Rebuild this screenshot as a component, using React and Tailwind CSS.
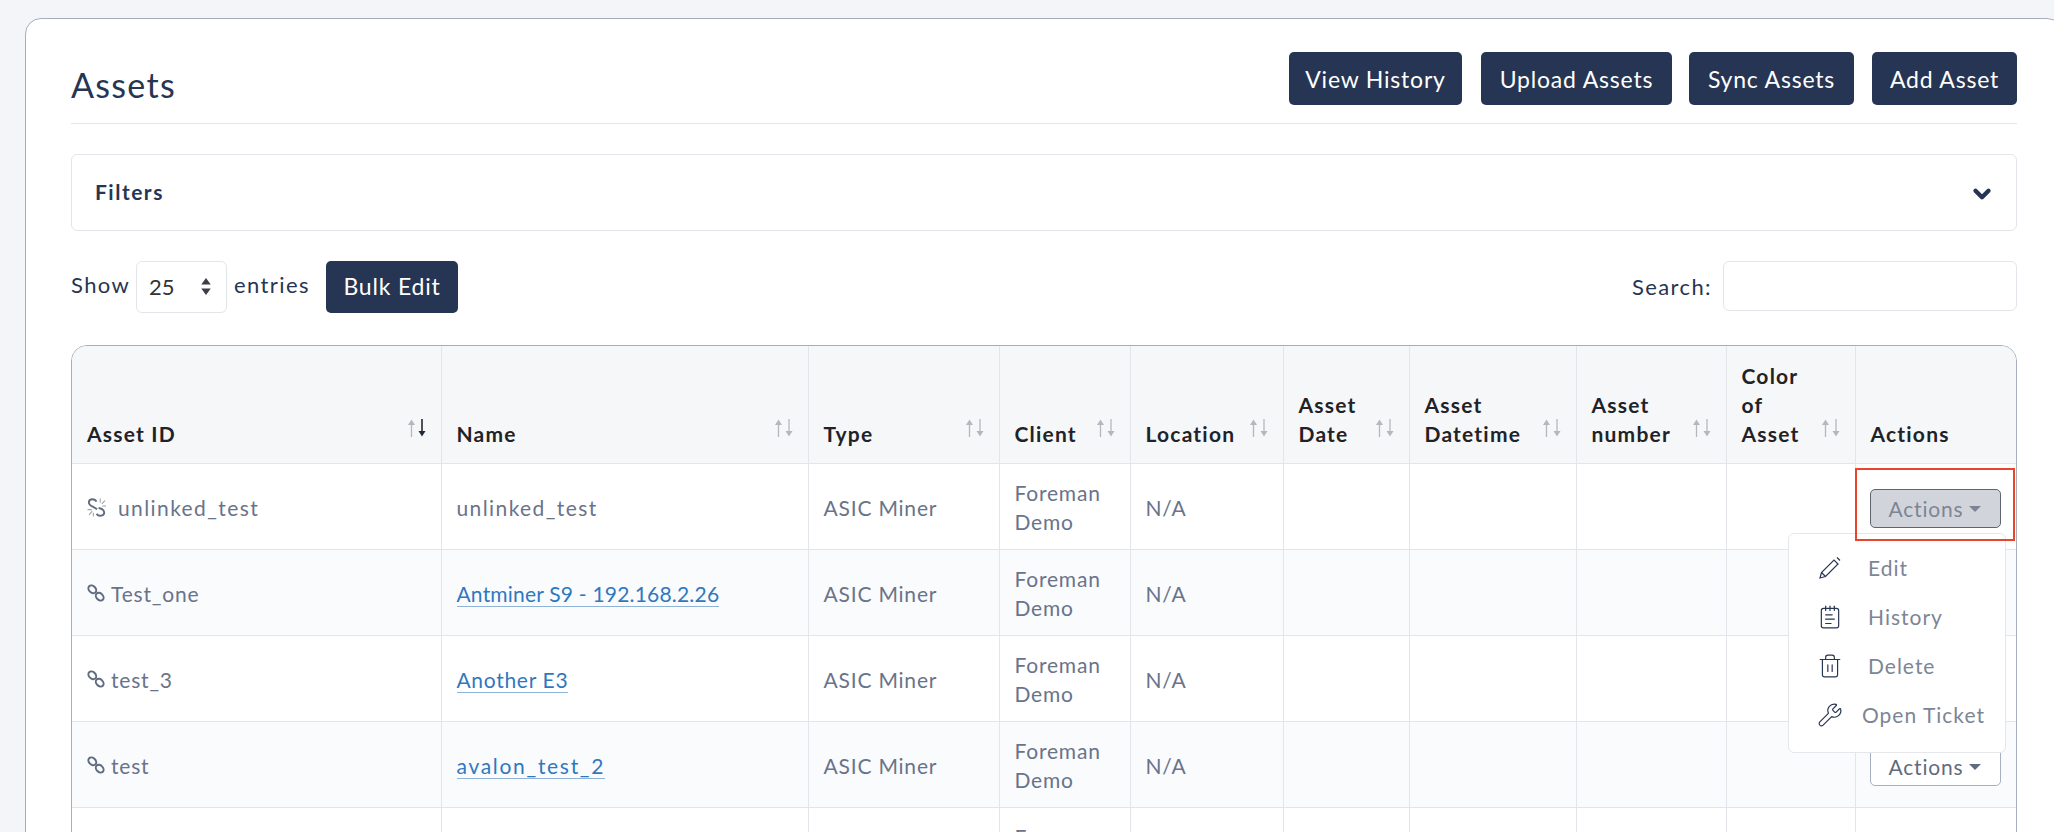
import { ChevronDown, NotepadText, Trash2, Wrench } from "lucide-react";

const rows = [
  { id: "unlinked_test", name: "unlinked_test", linked: false, action: true },
  { id: "Test_one", name: "Antminer S9 - 192.168.2.26", linked: true, track: "tracking-[0.2px]" },
  { id: "test_3", name: "Another E3", linked: true, track: "tracking-[0.7px]" },
  { id: "test", name: "avalon_test_2", linked: true, action: true, track: "tracking-[1.7px]" },
];

const columns = [
  { label: "Asset ID", width: "w-[369px]", active: true },
  { label: "Name", width: "w-[367px]" },
  { label: "Type", width: "w-[191px]" },
  { label: "Client", width: "w-[131px]" },
  { label: "Location", width: "w-[153px]" },
  { label: "Asset Date", width: "w-[126px]" },
  { label: "Asset Datetime", width: "w-[167px]" },
  { label: "Asset number", width: "w-[150px]" },
  { label: "Color of Asset", width: "w-[129px]" },
  { label: "Actions", width: "w-[161px]", noSort: true },
];

function SortIcon({ active }) {
  return (
    <svg viewBox="0 0 20 18" className="absolute right-[14px] bottom-[26px] h-[18px] w-[20px]">
      <path d="M4.5 18V5" stroke="#b4b8be" strokeWidth="1.3" />
      <path d="M4.5 0.500L8 6H1z" fill="#b4b8be" />
      <path d="M15 0V13" stroke={active ? "#1f2937" : "#b4b8be"} strokeWidth={active ? "1.6" : "1.3"} />
      <path d="M15 17.500L18.500 12H11.500z" fill={active ? "#1f2937" : "#b4b8be"} />
    </svg>
  );
}

function LinkIcon() {
  return (
    <svg viewBox="0 0 18 18" className="size-[18px] shrink-0 fill-none stroke-[#5f6b80] stroke-2">
      <ellipse cx="5.300" cy="5.300" rx="4.400" ry="3.300" transform="rotate(45 5.300 5.300)" />
      <ellipse cx="12.700" cy="12.700" rx="4.400" ry="3.300" transform="rotate(45 12.700 12.700)" />
    </svg>
  );
}

function UnlinkIcon() {
  return (
    <svg viewBox="0 0 18 18" className="size-[19px] shrink-0 fill-none">
      <path d="M9 3.500C7.500.5 2.500.5 1.800 3.500 1.300 6 3.500 7.300 6 8.500l3.500 2" stroke="#5f6b80" strokeWidth="1.800" />
      <path d="M11 9.500c2 .3 5 1.500 5.300 4 .2 3.500-5 4.500-7.300 1.500" stroke="#5f6b80" strokeWidth="1.800" />
      <path d="M12.500.5v4M14 5.500l3-3M14.500 7.500h3.500M.5 11h4M5 12.500L2 16M6 14v3.500" stroke="#9ca2ac" strokeWidth="1" />
    </svg>
  );
}

function PencilIcon() {
  return (
    <svg viewBox="0 0 22 22" className="size-[22px] shrink-0 fill-none stroke-[#263553] stroke-[1.2]">
      <path d="M1 21l1.500-5.500L15 3l4 4L6.500 19.500z" />
      <path d="M2.500 15.500l4 4M18 .5l3 3" />
    </svg>
  );
}

function ActionButton({ open }) {
  return (
    <button
      className={`mt-[4px] -ml-[1px] flex h-[39px] w-[131px] items-center justify-center gap-[6px] rounded-[5px] border text-[21px] tracking-[0.8px] ${
        open ? "border-[#5f6570] bg-[#d1d5db] text-[#7d8595]" : "border-[#a8afc0] bg-white text-[#5f6b80]"
      }`}
    >
      Actions
      <span className="mt-[2px] border-x-[6px] border-t-[6px] border-x-transparent border-t-current" />
    </button>
  );
}

function NavyButton({ children, className = "" }) {
  return (
    <button className={`rounded-[5px] bg-[#263553] text-[23px] tracking-[0.8px] text-white ${className}`}>{children}</button>
  );
}

function MenuItem({ icon, label, gap }) {
  return (
    <div className="flex h-[49px] items-center pl-[30px]">
      <span className="flex w-[22px] justify-center">{icon}</span>
      <span className={gap}>{label}</span>
    </div>
  );
}

export default function App() {
  return (
    <div className="relative h-[832px] w-[2054px] overflow-hidden bg-[#f4f5f9] pl-[25px] pt-[18px] font-['Lato','Noto_Sans',sans-serif]">
      <div className="h-[900px] w-[2038px] rounded-[16px] border border-[#a6adbf] bg-white px-[45px] pt-[33px]">
        {/* Title row */}
        <div className="flex h-[72px] items-start justify-between border-b border-[#e2e6ea]">
          <h1 className="mt-[13px] text-[34px] leading-[40px] tracking-[1.3px] text-[#263553]">Assets</h1>
          <div className="flex">
            <NavyButton className="h-[53px] w-[173px] pt-[1px]">View History</NavyButton>
            <NavyButton className="ml-[19px] h-[53px] w-[191px] pt-[1px]">Upload Assets</NavyButton>
            <NavyButton className="ml-[17px] h-[53px] w-[165px] pt-[1px]">Sync Assets</NavyButton>
            <NavyButton className="ml-[18px] h-[53px] w-[145px] pt-[1px]">Add Asset</NavyButton>
          </div>
        </div>

        {/* Filters */}
        <div className="mt-[30px] flex h-[77px] items-center justify-between rounded-[6px] border border-[#e2e6ea] pl-[23px] pr-[21px]">
          <span className="-mt-[2px] text-[21px] font-bold tracking-[1.5px] text-[#263553]">Filters</span>
          <ChevronDown className="mt-[3px] size-[26px] text-[#263553]" strokeWidth={4} />
        </div>

        {/* Table controls */}
        <div className="mt-[30px] flex h-[52px] items-start justify-between">
          <div className="flex items-center text-[22px] tracking-[1.4px] text-[#263553]">
            <span className="-mt-[5px] w-[59px]">Show</span>
            <div className="ml-[6px] flex h-[52px] w-[91px] items-center justify-between rounded-[6px] border border-[#e2e6ea] pb-[1px] pl-[12px] pr-[14px] tracking-normal text-[#333]">
              25
              <svg viewBox="0 0 12 20" className="h-[19px] w-[12px] fill-[#3a3f47]">
                <path d="M6 1l5 7H1zM6 19l-5-7h10z" />
              </svg>
            </div>
            <span className="-mt-[5px] ml-[7px] w-[76px]">entries</span>
            <NavyButton className="ml-[16px] h-[52px] w-[132px] pb-[1px]">Bulk Edit</NavyButton>
          </div>
          <div className="flex items-center text-[22px] tracking-[1.4px] text-[#263553]">
            <span>Search:</span>
            <input className="ml-[11px] h-[50px] w-[294px] rounded-[6px] border border-[#e2e6ea]" />
          </div>
        </div>

        {/* Table */}
        <div className="mt-[32px] w-[1946px] overflow-hidden rounded-[16px] border border-[#a6adbf]">
          <table className="w-full table-fixed border-collapse text-[21px] leading-[29px]">
            <thead>
              <tr className="h-[117px] bg-[#f6f7f9]">
                {columns.map((c) => (
                  <th
                    key={c.label}
                    className={`relative border-r border-b border-[#e2e6ea] px-[15px] pb-[15px] text-left align-bottom font-bold tracking-[1.2px] text-[#1f2328] last:border-r-0 ${c.width}`}
                  >
                    <span className="block pr-[26px]">{c.label}</span>
                    {!c.noSort && <SortIcon active={c.active} />}
                  </th>
                ))}
              </tr>
            </thead>
            <tbody className="tracking-[0.8px] text-[#69738a]">
              {rows.map((r, i) => (
                <tr key={r.id} className={`h-[86px] ${i % 2 ? "bg-[#fafbfd]" : "bg-white"}`}>
                  <td className="border-r border-b border-[#e2e6ea] px-[15px] pt-[2px]">
                    <span className={`flex items-center ${r.linked ? "gap-[6px]" : "gap-[12px] tracking-[1.4px]"}`}>
                      {r.linked ? <LinkIcon /> : <UnlinkIcon />}
                      {r.id}
                    </span>
                  </td>
                  <td className="border-r border-b border-[#e2e6ea] px-[15px] pt-[2px]">
                    {i === 0 ? (
                      <span className="tracking-[1.4px]">{r.name}</span>
                    ) : (
                      <a className={`border-b border-[#8fb3d9] text-[#2f78c0] ${r.track}`}>{r.name}</a>
                    )}
                  </td>
                  <td className="border-r border-b border-[#e2e6ea] px-[15px] pt-[2px]">ASIC Miner</td>
                  <td className="border-r border-b border-[#e2e6ea] px-[15px] pt-[2px]">Foreman Demo</td>
                  <td className="border-r border-b border-[#e2e6ea] px-[15px] pt-[2px]">N/A</td>
                  <td className="border-r border-b border-[#e2e6ea]" />
                  <td className="border-r border-b border-[#e2e6ea]" />
                  <td className="border-r border-b border-[#e2e6ea]" />
                  <td className="border-r border-b border-[#e2e6ea]" />
                  <td className="border-b border-[#e2e6ea] px-[15px]">{r.action && <ActionButton open={i === 0} />}</td>
                </tr>
              ))}
              {/* next row, cut off by the window */}
              <tr className="h-[86px] bg-white">
                <td className="border-r border-[#e2e6ea]" />
                <td className="border-r border-[#e2e6ea]" />
                <td className="border-r border-[#e2e6ea]" />
                <td className="border-r border-[#e2e6ea] px-[15px] pt-[2px]">Foreman Demo</td>
                <td className="border-r border-[#e2e6ea]" />
                <td className="border-r border-[#e2e6ea]" />
                <td className="border-r border-[#e2e6ea]" />
                <td className="border-r border-[#e2e6ea]" />
                <td className="border-r border-[#e2e6ea]" />
                <td />
              </tr>
            </tbody>
          </table>
        </div>
      </div>

      {/* Open dropdown menu */}
      <div className="absolute left-[1788px] top-[533px] flex h-[220px] w-[218px] flex-col rounded-[6px] border border-[#e5e7eb] bg-white pt-[9px] text-[21px] tracking-[1px] text-[#7d8595]">
        <MenuItem icon={<PencilIcon />} label="Edit" gap="ml-[27px]" />
        <MenuItem icon={<NotepadText className="size-[26px] shrink-0 text-[#263553]" strokeWidth={1.1} />} label="History" gap="ml-[27px]" />
        <MenuItem icon={<Trash2 className="size-[26px] shrink-0 text-[#263553]" strokeWidth={1.1} />} label="Delete" gap="ml-[27px]" />
        <MenuItem icon={<Wrench className="size-[26px] shrink-0 text-[#263553]" strokeWidth={1.1} />} label="Open Ticket" gap="ml-[21px]" />
      </div>

      {/* Red highlight annotation */}
      <div className="absolute left-[1855px] top-[468px] h-[73px] w-[160px] border-2 border-[#e8452c]" />
    </div>
  );
}
